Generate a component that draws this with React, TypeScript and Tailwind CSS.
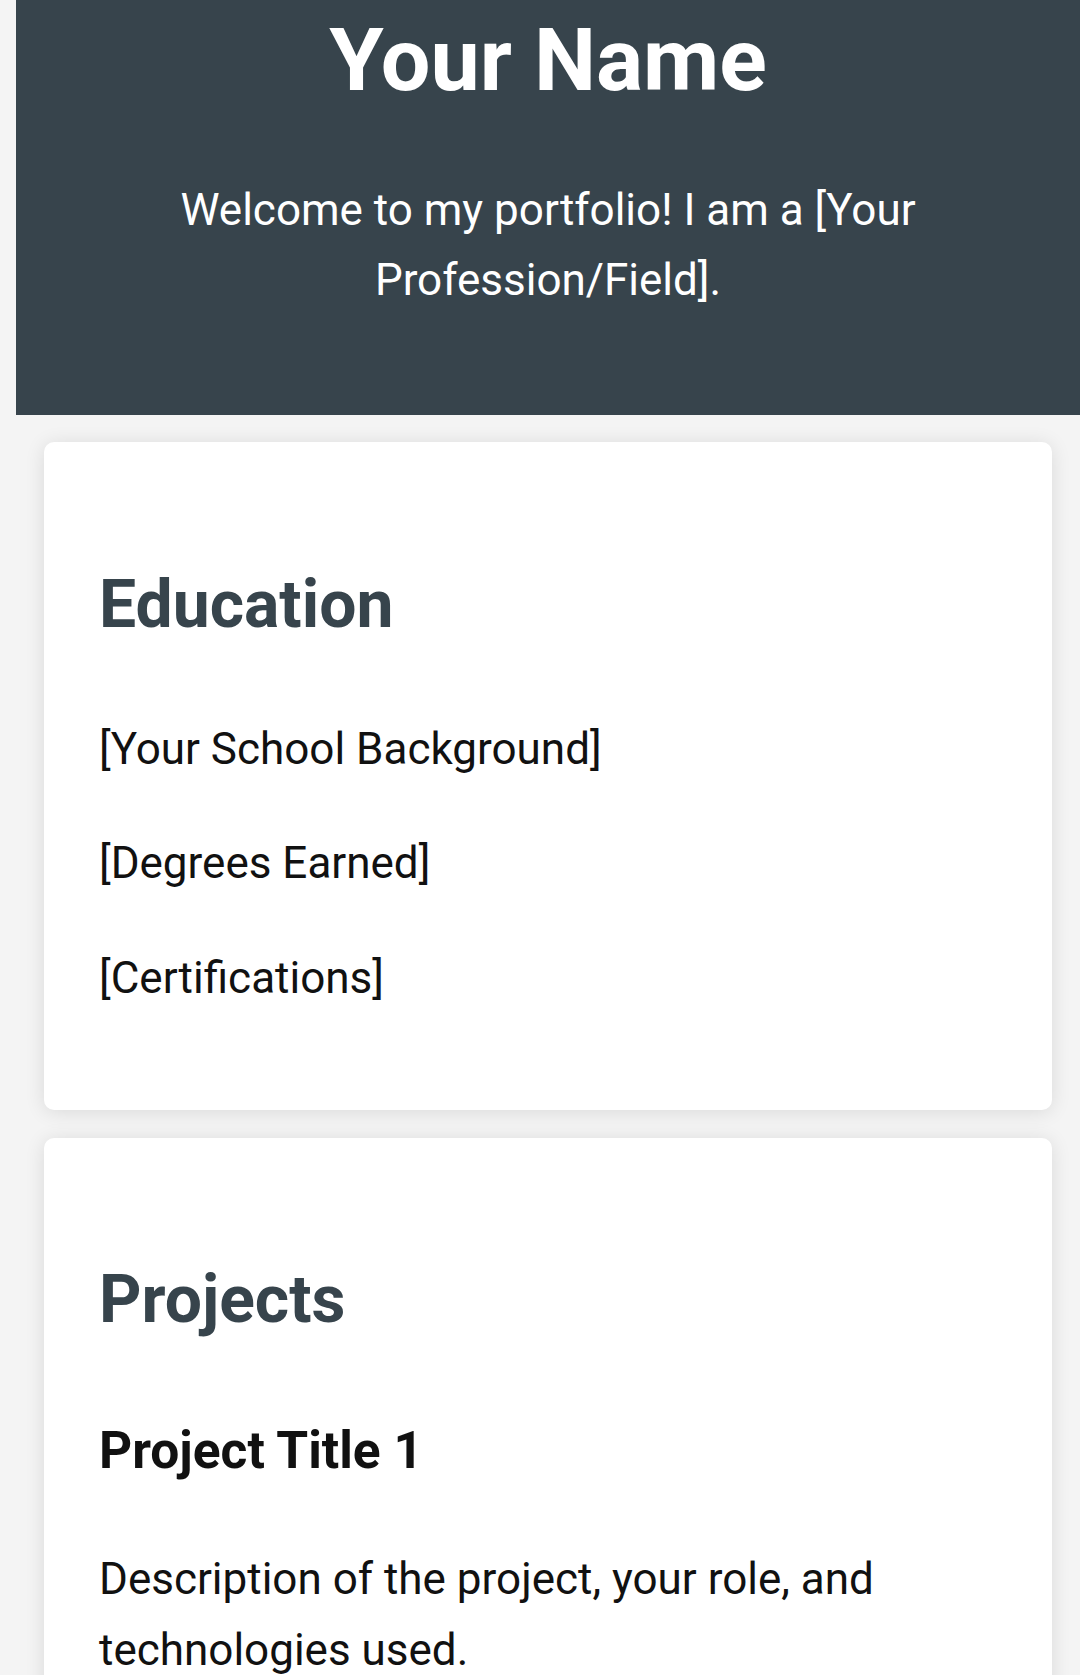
import React from "react";

export default function App() {
  return (
    <div
      className="min-h-screen bg-[#f4f4f4] pl-[16px] pb-[60px]"
      style={{ fontFamily: "Roboto, 'Noto Sans', Arial, sans-serif" }}
    >
      <header className="bg-[#37444c] text-white text-center pt-[7px] pb-[100px] px-[44px]">
        <h1 className="text-[88px] font-bold leading-[105.6px]">Your Name</h1>
        <p className="mt-[62px] text-[44px] leading-[70.4px] px-[60px]">
          Welcome to my portfolio! I am a [Your Profession/Field].
        </p>
      </header>

      <main className="px-[28px] pt-[27px] flex flex-col gap-[28px]">
        <section className="bg-white rounded-[10px] shadow-[0_2px_20px_rgba(0,0,0,0.11)] px-[55px] pt-[110px] pb-[97px]">
          <h2 className="text-[66px] font-bold leading-[105.6px] text-[#37444c]">Education</h2>
          <div className="mt-[56px] flex flex-col gap-[44px] text-[44px] leading-[70.4px] text-[#111]">
            <p>[Your School Background]</p>
            <p>[Degrees Earned]</p>
            <p>[Certifications]</p>
          </div>
        </section>

        <section className="bg-white rounded-[10px] shadow-[0_2px_20px_rgba(0,0,0,0.11)] px-[55px] pt-[109px] pb-[100px]">
          <h2 className="text-[66px] font-bold leading-[105.6px] text-[#37444c]">Projects</h2>
          <h3 className="mt-[57px] text-[51.5px] font-bold leading-[82.4px] text-[#111]">Project Title 1</h3>
          <p className="mt-[52px] text-[44px] leading-[70.4px] text-[#111]">
            Description of the project, your role, and technologies used.
          </p>
          <h3 className="mt-[51px] text-[51.5px] font-bold leading-[82.4px] text-[#111]">Project Title 2</h3>
          <p className="mt-[51px] text-[44px] leading-[70.4px] text-[#111]">
            Description of the project, your role, and technologies used.
          </p>
        </section>
      </main>
    </div>
  );
}
